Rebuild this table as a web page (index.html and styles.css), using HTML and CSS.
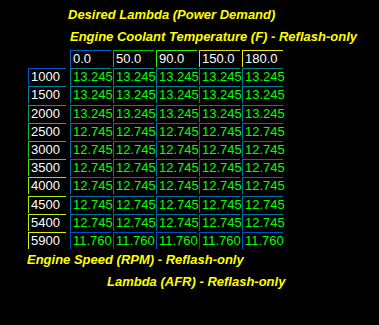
FILE: index.html
```html
<!DOCTYPE html>
<html>
<head>
<meta charset="utf-8">
<link rel="stylesheet" href="styles.css">
</head>
<body>
<div class="screen">
  <div class="title t1">Desired Lambda (Power Demand)</div>
  <div class="title t2">Engine Coolant Temperature (F) - Reflash-only</div>
  <div class="grid">
    <div class="corner"></div>
    <div class="cell head h1">0.0</div>
    <div class="cell head h2">50.0</div>
    <div class="cell head h3">90.0</div>
    <div class="cell head h4">150.0</div>
    <div class="cell head h5">180.0</div>

    <div class="cell lab r1">1000</div>
    <div class="cell val v13">13.245</div><div class="cell val v13">13.245</div><div class="cell val v13">13.245</div><div class="cell val v13">13.245</div><div class="cell val v13">13.245</div>

    <div class="cell lab r2">1500</div>
    <div class="cell val v13">13.245</div><div class="cell val v13">13.245</div><div class="cell val v13">13.245</div><div class="cell val v13">13.245</div><div class="cell val v13">13.245</div>

    <div class="cell lab r3">2000</div>
    <div class="cell val v13">13.245</div><div class="cell val v13">13.245</div><div class="cell val v13">13.245</div><div class="cell val v13">13.245</div><div class="cell val v13">13.245</div>

    <div class="cell lab r4">2500</div>
    <div class="cell val v12">12.745</div><div class="cell val v12">12.745</div><div class="cell val v12">12.745</div><div class="cell val v12">12.745</div><div class="cell val v12">12.745</div>

    <div class="cell lab r5">3000</div>
    <div class="cell val v12">12.745</div><div class="cell val v12">12.745</div><div class="cell val v12">12.745</div><div class="cell val v12">12.745</div><div class="cell val v12">12.745</div>

    <div class="cell lab r6">3500</div>
    <div class="cell val v12">12.745</div><div class="cell val v12">12.745</div><div class="cell val v12">12.745</div><div class="cell val v12">12.745</div><div class="cell val v12">12.745</div>

    <div class="cell lab r7">4000</div>
    <div class="cell val v12">12.745</div><div class="cell val v12">12.745</div><div class="cell val v12">12.745</div><div class="cell val v12">12.745</div><div class="cell val v12">12.745</div>

    <div class="cell lab r8">4500</div>
    <div class="cell val v12">12.745</div><div class="cell val v12">12.745</div><div class="cell val v12">12.745</div><div class="cell val v12">12.745</div><div class="cell val v12">12.745</div>

    <div class="cell lab r9">5400</div>
    <div class="cell val v12">12.745</div><div class="cell val v12">12.745</div><div class="cell val v12">12.745</div><div class="cell val v12">12.745</div><div class="cell val v12">12.745</div>

    <div class="cell lab r10">5900</div>
    <div class="cell val v11">11.760</div><div class="cell val v11">11.760</div><div class="cell val v11">11.760</div><div class="cell val v11">11.760</div><div class="cell val v11">11.760</div>
  </div>
  <div class="title t3">Engine Speed (RPM) - Reflash-only</div>
  <div class="title t4">Lambda (AFR) - Reflash-only</div>
</div>
</body>
</html>
```

FILE: styles.css
```css
html, body {
  margin: 0;
  padding: 0;
  background: #000;
}
body {
  width: 379px;
  height: 325px;
  overflow: hidden;
  font-family: "Liberation Sans", Arial, sans-serif;
}
.screen {
  padding-top: 4px;
}
.title {
  font-style: italic;
  font-weight: bold;
  font-size: 13px;
  line-height: 22px;
  height: 22px;
  color: #ffff00;
  white-space: nowrap;
}
.t1 { padding-left: 68px; }
.t2 { padding-left: 70px; }
.t3 { padding-left: 27px; }
.t4 { padding-left: 107px; }

.grid {
  margin: 2px 0 0 28px;
  display: grid;
  grid-template-columns: 40px repeat(5, 41px);
  grid-auto-rows: 17px;
  column-gap: 2px;
  row-gap: 1.2px;
}
.cell {
  box-sizing: border-box;
  border-top: 1px solid #0070a0;
  border-left: 1px solid #0070a0;
  padding-left: 2px;
  font-size: 13px;
  line-height: 16px;
  white-space: nowrap;
}
.lab {
  width: 38px;
  color: #ffffff;
}
.head { color: #ffffff; }
.val { color: #00ff00; }

.h1 { border-color: #0060c8; }
.h2 { border-color: #00c000; }
.h3 { border-color: #30f000; }
.h4 { border-color: #e0e000; }
.h5 { border-color: #f0f000; }

.r1 { border-color: #0058c8; }
.r2 { border-color: #00809a; }
.r3 { border-color: #00a070; }
.r4 { border-color: #00c040; }
.r5 { border-color: #10d020; }
.r6 { border-color: #40e000; }
.r7 { border-color: #80f000; }
.r8 { border-color: #a0f000; }
.r9 { border-color: #c0f000; }
.r10 { border-color: #e0f000; }

.v13 { border-color: #008090; }
.v12 { border-color: #0070a8; }
.v11 { border-color: #0050c8; }
```
